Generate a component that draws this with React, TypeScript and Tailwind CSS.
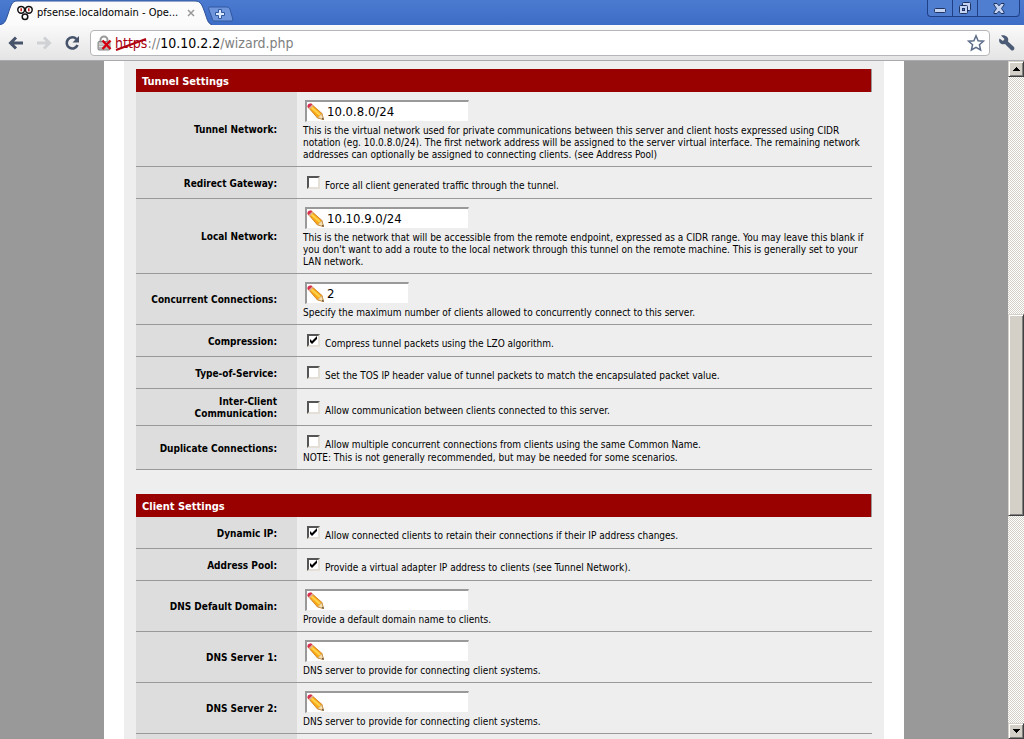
import React from "react";

type Field = {
  id: string;
  label: string;
  kind: "text" | "check";
  value?: string;
  checked?: boolean;
  narrow?: boolean;
  text?: string;
  note?: string;
};

const tunnel: Field[] = [
  { id: "tunnelnet", label: "Tunnel Network:", kind: "text", value: "10.0.8.0/24", text: "This is the virtual network used for private communications between this server and client hosts expressed using CIDR notation (eg. 10.0.8.0/24). The first network address will be assigned to the server virtual interface. The remaining network addresses can optionally be assigned to connecting clients. (see Address Pool)" },
  { id: "rdrgw", label: "Redirect Gateway:", kind: "check", text: "Force all client generated traffic through the tunnel." },
  { id: "localnet", label: "Local Network:", kind: "text", value: "10.10.9.0/24", text: "This is the network that will be accessible from the remote endpoint, expressed as a CIDR range. You may leave this blank if you don't want to add a route to the local network through this tunnel on the remote machine. This is generally set to your LAN network." },
  { id: "concurrentcon", label: "Concurrent Connections:", kind: "text", value: "2", narrow: true, text: "Specify the maximum number of clients allowed to concurrently connect to this server." },
  { id: "compression", label: "Compression:", kind: "check", checked: true, text: "Compress tunnel packets using the LZO algorithm." },
  { id: "tos", label: "Type-of-Service:", kind: "check", text: "Set the TOS IP header value of tunnel packets to match the encapsulated packet value." },
  { id: "interclient", label: "Inter-Client Communication:", kind: "check", text: "Allow communication between clients connected to this server." },
  { id: "duplicate", label: "Duplicate Connections:", kind: "check", text: "Allow multiple concurrent connections from clients using the same Common Name.", note: "NOTE: This is not generally recommended, but may be needed for some scenarios." },
];

const client: Field[] = [
  { id: "dynip", label: "Dynamic IP:", kind: "check", checked: true, text: "Allow connected clients to retain their connections if their IP address changes." },
  { id: "addrpool", label: "Address Pool:", kind: "check", checked: true, text: "Provide a virtual adapter IP address to clients (see Tunnel Network)." },
  { id: "defaultdomain", label: "DNS Default Domain:", kind: "text", value: "", text: "Provide a default domain name to clients." },
  { id: "dns1", label: "DNS Server 1:", kind: "text", value: "", text: "DNS server to provide for connecting client systems." },
  { id: "dns2", label: "DNS Server 2:", kind: "text", value: "", text: "DNS server to provide for connecting client systems." },
];

function Pencil() {
  return (
    <svg width="18" height="18" viewBox="0 0 18 18" aria-hidden="true" className="shrink-0">
      <path d="M.8 3.8 4 .8 15 10.500l1.500 6-6-1.500z" fill="#f9a818" stroke="#c87418" strokeWidth="0.8" />
      <path d="M3.500 3.500 13 12" stroke="#ffd24a" strokeWidth="2.200" />
      <path d="M10.800 14.600 14.600 10.800l1.900 5.700z" fill="#f6dfb0" stroke="#c09a60" strokeWidth="0.6" />
      <path d="m14.800 16 1.900.8-.6-2z" fill="#333" />
      <path d="M.6 4C-.2 1.800 1.800-.2 4.200.6l1.200 1L1.600 5.200z" fill="#d92f55" />
      <path d="M1.600 5.200 5.400 1.600l1 1-3.800 3.600z" fill="#d9a9a0" />
    </svg>
  );
}

function Favicon() {
  return (
    <svg width="16" height="16" viewBox="0 0 16 16" aria-hidden="true" className="shrink-0">
      <g fill="#fff" stroke="#111" strokeWidth="1.5">
        <circle cx="8" cy="11.800" r="2.800" />
        <circle cx="4.200" cy="4.800" r="3.400" />
        <circle cx="11.800" cy="4.800" r="3.400" />
      </g>
      <path d="M4.200 3.300v3M11.800 3.300v3" stroke="#c22" strokeWidth="1.600" />
    </svg>
  );
}

function Row({ f }: { f: Field }) {
  return (
    <tr className="border-b border-[#999]">
      <th scope="row" className="bg-[#ddd] pt-[7px] pr-5 pb-[5px] pl-2 text-right align-middle font-bold">
        <label htmlFor={f.id}>{f.label}</label>
      </th>
      {f.kind === "text" ? (
        <td className="px-1.5 pt-2 pb-[5px] align-middle">
          <div className={`mb-[3px] ml-0.5 flex h-[22px] items-center border-t-2 border-r border-b border-l-2 border-t-[#999] border-r-[#eee] border-b-[#eee] border-l-[#999] bg-white ${f.narrow ? "w-[104px]" : "w-[164px]"}`}>
            <Pencil />
            <input id={f.id} type="text" defaultValue={f.value} className="ml-0.5 w-full min-w-0 bg-transparent text-[13px] leading-4 outline-none" />
          </div>
          <p>{f.text}</p>
        </td>
      ) : (
        <td className="px-1.5 pt-[9px] pb-[5px] align-middle">
          <div className="flex h-[17px] items-start gap-[5px] pl-1">
            <span className="grid shrink-0">
              <input id={f.id} type="checkbox" defaultChecked={f.checked} className="peer col-start-1 row-start-1 size-[13px] appearance-none border-2 border-t-[#555] border-r-[#e4e0d8] border-b-[#e4e0d8] border-l-[#555] bg-white" />
              <svg width="13" height="13" viewBox="0 0 13 13" aria-hidden="true" className="pointer-events-none invisible col-start-1 row-start-1 peer-checked:visible">
                <path d="M3 5v3l2 2 5-5V2L5 7z" fill="#000" />
              </svg>
            </span>
            <label htmlFor={f.id} className="pt-1">{f.text}</label>
          </div>
          {f.note && <p>{f.note}</p>}
        </td>
      )}
    </tr>
  );
}

function Section({ title, fields, continued }: { title: string; fields: Field[]; continued?: boolean }) {
  return (
    <table className="w-full table-fixed border-collapse">
      <colgroup>
        <col className="w-[161px]" />
        <col />
      </colgroup>
      <thead>
        <tr>
          <th colSpan={2} className="h-[23px] border-r border-[#999] bg-[#900] px-1.5 pt-0.5 text-left text-[11px] font-bold text-white">{title}</th>
        </tr>
      </thead>
      <tbody>
        {fields.map((f) => <Row key={f.id} f={f} />)}
        {continued && (
          <tr aria-hidden="true">
            <td className="h-12 bg-[#ddd]" />
            <td />
          </tr>
        )}
      </tbody>
    </table>
  );
}

const winButton = "flex items-center justify-center border-r border-[#1f3f86]";
const scrollButton = "flex size-4 shrink-0 items-center justify-center border border-t-[#d4d0c8] border-l-[#d4d0c8] border-r-[#404040] border-b-[#404040] bg-[#d4d0c8] shadow-[inset_1px_1px_#fff,inset_-1px_-1px_#808080]";

export default function App() {
  return (
    <div className="flex h-screen flex-col overflow-hidden bg-[#999] font-['DejaVu_Sans_Condensed','DejaVu_Sans',sans-serif] text-[10px] leading-3 text-black">
      <header className="shrink-0">
        <div className="flex h-[25px] items-start justify-between bg-linear-to-b from-[#4a7bd0] to-[#3d6cc6]">
          <div className="flex h-[25px]">
            <div className="grid w-[212px]">
              <svg width="212" height="25" viewBox="0 0 212 25" aria-hidden="true" className="col-start-1 row-start-1">
                <path d="M0 25C5 24 6 20 8 14 11 5 12 1 17 1H195C201 1 202 5 205 13c2 6 3 11 7 12z" fill="#fbfbfb" />
                <path d="M0 24.5C5 24 6 20 8 14 11 5 12 1 17 1H195C201 1 202 5 205 13c2 6 3 11 7 11.500" fill="none" stroke="#2f5297" />
              </svg>
              <div className="col-start-1 row-start-1 flex items-center pl-[17px]">
                <Favicon />
                <span className="ml-1 w-[140px] shrink-0 text-[11px] leading-4 whitespace-nowrap">pfsense.localdomain - Ope...</span>
                <button aria-label="Close tab" className="ml-2.5">
                  <svg width="8" height="8" viewBox="0 0 8 8"><path d="m1 1 6 6M7 1 1 7" stroke="#999" strokeWidth="1.500" /></svg>
                </button>
              </div>
            </div>
            <button aria-label="New tab" className="-ml-1 pt-1">
              <svg width="26" height="17" viewBox="0 0 26 17">
                <path d="M1.500 1H19c2 0 3 2 3.500 4l2 7c.5 2 0 3-1 3H7c-2 0-2.500-1-3-3L1 4C.500 2 .5 1 1.500 1z" fill="#6e95dc" stroke="#31589f" />
                <path d="M10.500 3.500h3v3h3v3h-3v3h-3v-3h-3v-3h3z" fill="#dce8fb" stroke="#31589f" />
              </svg>
            </button>
          </div>
          <div className="mr-1 flex h-[17px] rounded-b border-b border-l border-[#1f3f86] bg-[#4f7dd0]">
            <button aria-label="Minimize" className={`${winButton} w-[25px]`}>
              <svg width="12" height="5" viewBox="0 0 12 5" className="mt-1"><rect x=".5" y=".5" width="11" height="4" rx="1" fill="#c4d4f2" stroke="#1f3460" /></svg>
            </button>
            <button aria-label="Restore" className={`${winButton} w-[25px]`}>
              <svg width="14" height="13" viewBox="0 0 14 13" fill="#c4d4f2" stroke="#1f3460">
                <rect x="4.500" y=".5" width="8" height="8" rx="1" />
                <rect x="1.500" y="3.500" width="8" height="8" rx="1" />
                <rect x="4.500" y="6.500" width="2" height="2" fill="#5482d2" />
              </svg>
            </button>
            <button aria-label="Close" className={`${winButton} w-[42px] rounded-br`}>
              <svg width="12" height="11" viewBox="0 0 12 11"><path d="M1 .5h3l2 2.300L8 .5h3v1.500L8.500 5.500 11 9v1.500H8L6 8.200 4 10.500H1V9l2.500-3.500L1 2z" fill="#c4d4f2" stroke="#1f3460" /></svg>
            </button>
          </div>
        </div>
        <div className="flex h-9 items-center border-b border-[#a9aab0] bg-linear-to-b from-[#fafafa] to-[#e4e4e4] px-2">
          <button aria-label="Back" className="mr-3">
            <svg width="16" height="16" viewBox="0 0 16 16"><path d="M15 8H3M8 2.500 2.500 8 8 13.500" fill="none" stroke="#46536a" strokeWidth="3" /></svg>
          </button>
          <button aria-label="Forward" className="mr-3">
            <svg width="16" height="16" viewBox="0 0 16 16"><path d="M1 8h12M8 2.500 13.500 8 8 13.500" fill="none" stroke="#cfd1d5" strokeWidth="3" /></svg>
          </button>
          <button aria-label="Reload" className="mr-2.5">
            <svg width="16" height="16" viewBox="0 0 16 16"><path d="M12.500 4.200A5.600 5.600 0 1 0 13.500 10" fill="none" stroke="#46536a" strokeWidth="2.600" /><path d="M15 1v6.500H8.500z" fill="#46536a" /></svg>
          </button>
          <div className="flex h-[26px] flex-1 items-center rounded border border-[#b5b6b9] bg-white pr-1 pl-1.5">
            <svg width="16" height="16" viewBox="0 0 16 16" aria-hidden="true">
              <path d="M3.500 7V5a3.500 3.500 0 0 1 7 0v2" fill="none" stroke="#999" strokeWidth="2" />
              <rect x="1" y="6.500" width="12" height="8.500" rx="1" fill="#b5b5b5" stroke="#888" />
              <path d="M2 9h10M2 11.500h10" stroke="#ddd" />
              <path d="m5.500 5.500 8 8.500M13.500 5.500l-8 8.500" stroke="#d3000f" strokeWidth="2.400" />
            </svg>
            <div className="ml-0.5 flex-1 text-[14px] leading-5 whitespace-nowrap text-[#808080]">
              <span className="relative text-[#a80010]">
                https
                <svg width="34" height="16" viewBox="0 0 34 16" className="absolute top-0.5 -left-px" aria-hidden="true"><path d="M2 13 32 2" stroke="#b00010" strokeWidth="2" /></svg>
              </span>
              ://<span className="text-black">10.10.2.2</span>/wizard.php
            </div>
            <button aria-label="Bookmark this page">
              <svg width="18" height="18" viewBox="0 0 18 18"><path d="m9 1.800 2.100 4.900 5.300.5-4 3.500 1.200 5.300L9 13.300 4.400 16l1.200-5.300-4-3.500 5.300-.5z" fill="#fff" stroke="#5d6c88" strokeWidth="1.500" /></svg>
            </button>
          </div>
          <button aria-label="Customize and control" className="ml-2">
            <svg width="18" height="18" viewBox="0 0 18 18"><path d="M3 1.500 6.500 5 5 7 1.500 4.500C0 8 3 11.500 7 10l6 6c1.500 1.500 4.500-.5 3-3L10 7.500C11.500 3 7 .5 3 1.500z" fill="#4c5b75" /></svg>
          </button>
        </div>
      </header>

      <div className="flex min-h-0 flex-1">
        <main className="flex min-w-0 flex-1 justify-center overflow-hidden">
          <div className="w-[800px] bg-white px-5">
            <form className="flex flex-col gap-6 bg-[#eee] px-3 pt-2">
              <Section title="Tunnel Settings" fields={tunnel} />
              <Section title="Client Settings" fields={client} continued />
            </form>
          </div>
        </main>
        <div className="flex w-4 shrink-0 flex-col bg-[repeating-conic-gradient(#d4d0c8_0_25%,#fff_0_50%)] bg-size-[2px_2px]">
          <button aria-label="Scroll up" className={scrollButton}>
            <svg width="7" height="4" viewBox="0 0 7 4" shapeRendering="crispEdges"><path d="M0 4 3.500 0 7 4z" /></svg>
          </button>
          <div className="flex-[238]" />
          <div className="flex-[201] border border-t-[#d4d0c8] border-r-[#404040] border-b-[#404040] border-l-[#d4d0c8] bg-[#d4d0c8] shadow-[inset_1px_1px_#fff,inset_-1px_-1px_#808080]" />
          <div className="flex-[208]" />
          <button aria-label="Scroll down" className={scrollButton}>
            <svg width="7" height="4" viewBox="0 0 7 4" shapeRendering="crispEdges"><path d="M0 0h7L3.500 4z" /></svg>
          </button>
        </div>
      </div>
    </div>
  );
}
